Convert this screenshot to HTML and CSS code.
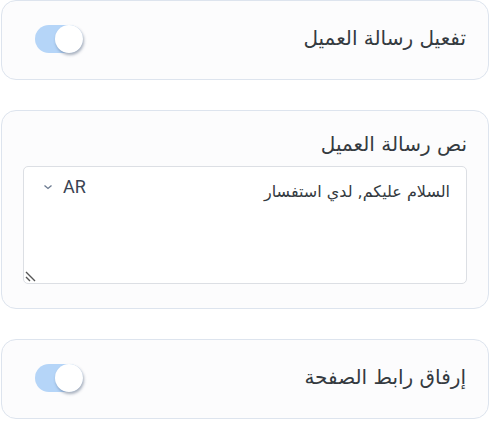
FILE: index.html
```html
<!DOCTYPE html>
<html lang="ar" dir="rtl">
<head>
<meta charset="utf-8">
<link rel="stylesheet" href="styles.css">
</head>
<body>
<div class="stack">
  <section class="card row">
    <span class="label">تفعيل رسالة العميل</span>
    <span class="toggle"><span class="knob"></span></span>
  </section>
  <section class="card col">
    <span class="label">نص رسالة العميل</span>
    <div class="textbox">
      <div class="msg">السلام عليكم, لدي استفسار</div>
      <div class="lang">AR <svg width="10" height="6" viewBox="0 0 10 6"><path d="M1.5 1.5 L5 4.5 L8.5 1.5" fill="none" stroke="#6b7a90" stroke-width="1.3"/></svg></div>
      <svg class="grip" width="12" height="12" viewBox="0 0 12 12"><path d="M1 2 L10 11 M1 7 L5 11" stroke="#555" stroke-width="1.4"/></svg>
    </div>
  </section>
  <section class="card row">
    <span class="label">إرفاق رابط الصفحة</span>
    <span class="toggle"><span class="knob"></span></span>
  </section>
</div>
</body>
</html>
```
FILE: styles.css
```css
html, body { margin: 0; padding: 0; background: #ffffff; }
body { font-family: "DejaVu Sans", "Noto Sans", sans-serif; color: #343a40; }
.stack { display: flex; flex-direction: column; gap: 30px; width: 488px; }
.card {
  box-sizing: border-box;
  border: 1px solid #dde4ee;
  border-radius: 15px;
  background: #fcfcfd;
}
.row {
  height: 80px;
  display: flex;
  align-items: center;
  justify-content: space-between;
  padding: 0 22px 4px 33px;
}
.col {
  height: 199px;
  display: flex;
  flex-direction: column;
  padding: 20px 21px 0 21px;
}
.label { font-size: 20px; line-height: 26px; }
.toggle {
  position: relative;
  width: 48px; height: 28px;
  border-radius: 14px;
  background: #b5d5f8;
  margin-top: 1px;
}
.knob {
  position: absolute;
  left: 20px; top: 0;
  width: 28px; height: 28px;
  border-radius: 50%;
  background: #fff;
  box-shadow: 1px 2px 3px rgba(60,80,110,0.45);
}
.textbox {
  position: relative;
  margin-top: 9px;
  height: 116px;
  border: 1px solid #dcdfe4;
  border-radius: 5px;
  background: #fff;
}
.msg { font-size: 16px; padding: 12px 16px 0 0; line-height: 26px; }
.lang {
  position: absolute; left: 19px; top: 9px;
  direction: ltr;
  display: flex; flex-direction: row-reverse; align-items: center; gap: 10px;
  font-family: "Roboto", sans-serif; font-size: 18px; color: #3a4352;
}
.grip { position: absolute; left: 1px; bottom: 1px; }
```
